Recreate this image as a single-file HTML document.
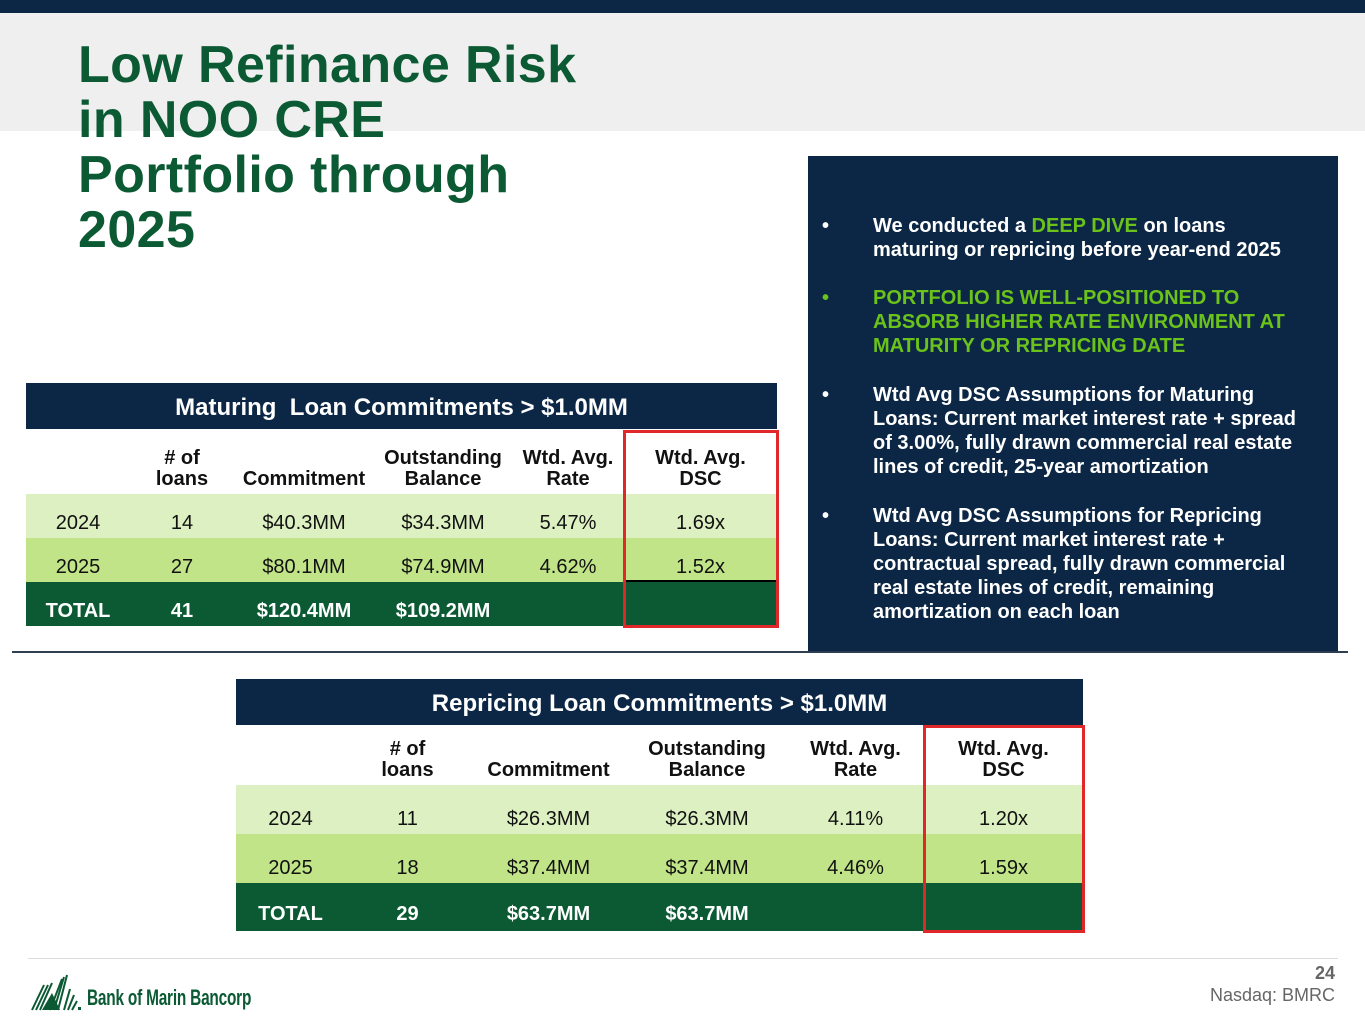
<!DOCTYPE html>
<html><head><meta charset="utf-8"><style>
*{margin:0;padding:0;box-sizing:border-box}
body{width:1365px;height:1024px;position:relative;background:#fff;font-family:"Liberation Sans",Arial,sans-serif;overflow:hidden}
.a{position:absolute}
.top{left:0;top:0;width:1365px;height:13px;background:#0c2745}
.band{left:0;top:13px;width:1365px;height:118px;background:#efefef}
.title{left:78px;top:38px;font-size:52px;line-height:55px;font-weight:bold;color:#0b5a34;letter-spacing:0.4px}
.panel{left:808px;top:156px;width:530px;height:496px;background:#0c2745;color:#fff;font-weight:bold;font-size:20px;line-height:24px}
.panel .b{position:absolute;left:14px}
.panel .t{position:absolute;left:65px;width:442px}
.g{color:#6ac21a}
.sep{left:12px;top:651px;width:1336px;height:2px;background:#2d3e52}
.row{position:absolute;display:flex;align-items:center}
.row div{text-align:center;font-family:"Liberation Sans Narrow","Liberation Sans",sans-serif;font-size:20px;color:#111}
.d div{padding-top:14px}
.d2 div{padding-top:20px}
.hd{background:#0c2745;color:#fff;font-weight:bold;font-size:24px;display:flex;align-items:center;justify-content:center;padding-top:4px;font-family:"Liberation Sans Narrow","Liberation Sans",sans-serif}
.h div{font-weight:bold;line-height:21px;align-self:flex-end;padding-bottom:4px}
.r1{background:#ddf0c2}.r2{background:#c0e487}
.tot{background:#0b5a34}.tot div{color:#fff;font-weight:bold}
.red{border:3px solid #e0282a}
</style></head><body>
<div class="a top"></div>
<div class="a band"></div>
<div class="a title">Low Refinance Risk<br>in NOO CRE<br>Portfolio through<br>2025</div>

<div class="a panel">
<div class="b" style="top:58px">•</div><div class="t" style="top:58px">We conducted a <span class="g">DEEP DIVE</span> on loans maturing or repricing before year-end 2025</div>
<div class="b g" style="top:130px">•</div><div class="t g" style="top:130px">PORTFOLIO IS WELL-POSITIONED TO ABSORB HIGHER RATE ENVIRONMENT AT MATURITY OR REPRICING DATE</div>
<div class="b" style="top:227px">•</div><div class="t" style="top:227px">Wtd Avg DSC Assumptions for Maturing Loans: Current market interest rate + spread of 3.00%, fully drawn commercial real estate lines of credit, 25-year amortization</div>
<div class="b" style="top:348px">•</div><div class="t" style="top:348px">Wtd Avg DSC Assumptions for Repricing Loans: Current market interest rate + contractual spread, fully drawn commercial real estate lines of credit, remaining amortization on each loan</div>
</div>

<!-- Table 1 -->
<div class="a hd" style="left:26px;top:383px;width:751px;height:46px">Maturing&nbsp; Loan Commitments &gt; $1.0MM</div>
<div class="row h" style="left:26px;top:429px;width:751px;height:65px">
<div style="width:104px"></div><div style="width:104px"># of<br>loans</div><div style="width:140px">Commitment</div><div style="width:138px">Outstanding<br>Balance</div><div style="width:112px">Wtd. Avg.<br>Rate</div><div style="width:153px">Wtd. Avg.<br>DSC</div></div>
<div class="row r1 d" style="left:26px;top:494px;width:751px;height:44px">
<div style="width:104px">2024</div><div style="width:104px">14</div><div style="width:140px">$40.3MM</div><div style="width:138px">$34.3MM</div><div style="width:112px">5.47%</div><div style="width:153px">1.69x</div></div>
<div class="row r2 d" style="left:26px;top:538px;width:751px;height:44px">
<div style="width:104px">2025</div><div style="width:104px">27</div><div style="width:140px">$80.1MM</div><div style="width:138px">$74.9MM</div><div style="width:112px">4.62%</div><div style="width:153px">1.52x</div></div>
<div class="a" style="left:624px;top:580px;width:153px;height:2px;background:#000"></div>
<div class="row tot d" style="left:26px;top:582px;width:751px;height:44px">
<div style="width:104px">TOTAL</div><div style="width:104px">41</div><div style="width:140px">$120.4MM</div><div style="width:138px">$109.2MM</div><div style="width:112px"></div><div style="width:153px"></div></div>
<div class="a red" style="left:623px;top:430px;width:156px;height:198px"></div>

<div class="a sep"></div>

<!-- Table 2 -->
<div class="a hd" style="left:236px;top:679px;width:847px;height:46px">Repricing Loan Commitments &gt; $1.0MM</div>
<div class="row h" style="left:236px;top:725px;width:847px;height:60px">
<div style="width:109px"></div><div style="width:125px"># of<br>loans</div><div style="width:157px">Commitment</div><div style="width:160px">Outstanding<br>Balance</div><div style="width:137px">Wtd. Avg.<br>Rate</div><div style="width:159px">Wtd. Avg.<br>DSC</div></div>
<div class="row r1 d2" style="left:236px;top:785px;width:847px;height:49px">
<div style="width:109px">2024</div><div style="width:125px">11</div><div style="width:157px">$26.3MM</div><div style="width:160px">$26.3MM</div><div style="width:137px">4.11%</div><div style="width:159px">1.20x</div></div>
<div class="row r2 d2" style="left:236px;top:834px;width:847px;height:49px">
<div style="width:109px">2025</div><div style="width:125px">18</div><div style="width:157px">$37.4MM</div><div style="width:160px">$37.4MM</div><div style="width:137px">4.46%</div><div style="width:159px">1.59x</div></div>
<div class="row tot d" style="left:236px;top:883px;width:847px;height:48px">
<div style="width:109px">TOTAL</div><div style="width:125px">29</div><div style="width:157px">$63.7MM</div><div style="width:160px">$63.7MM</div><div style="width:137px"></div><div style="width:159px"></div></div>
<div class="a red" style="left:923px;top:725px;width:162px;height:208px"></div>

<!-- Footer -->
<div class="a" style="left:28px;top:958px;width:1310px;height:1px;background:#ddd"></div>
<svg class="a" style="left:30px;top:973px" width="52" height="38" viewBox="0 0 52 38">
<g stroke="#0b5a34" stroke-width="2">
<line x1="2" y1="37" x2="14" y2="12"/><line x1="6" y1="37" x2="18" y2="12"/><line x1="10" y1="37" x2="22" y2="10"/>
<line x1="20" y1="37" x2="32" y2="6"/><line x1="24" y1="37" x2="34" y2="4"/><line x1="28" y1="37" x2="37" y2="2"/>
<line x1="34" y1="37" x2="40" y2="16"/><line x1="38" y1="37" x2="44" y2="22"/><line x1="42" y1="37" x2="47" y2="28"/></g>
<polygon points="12,37 22,20 30,37" fill="#0b5a34"/><rect x="48" y="34" width="3" height="3" fill="#0b5a34"/>
</svg>
<div class="a" style="left:87px;top:985px;font-family:'Liberation Sans Narrow','Liberation Sans',sans-serif;font-weight:bold;font-size:22px;color:#0b5a34;letter-spacing:-0.3px;transform:scaleX(.7);transform-origin:left;white-space:nowrap">Bank of Marin Bancorp</div>
<div class="a" style="right:30px;top:963px;font-weight:bold;font-size:18px;color:#666">24</div>
<div class="a" style="right:30px;top:985px;font-size:18px;color:#666">Nasdaq: BMRC</div>
</body></html>
